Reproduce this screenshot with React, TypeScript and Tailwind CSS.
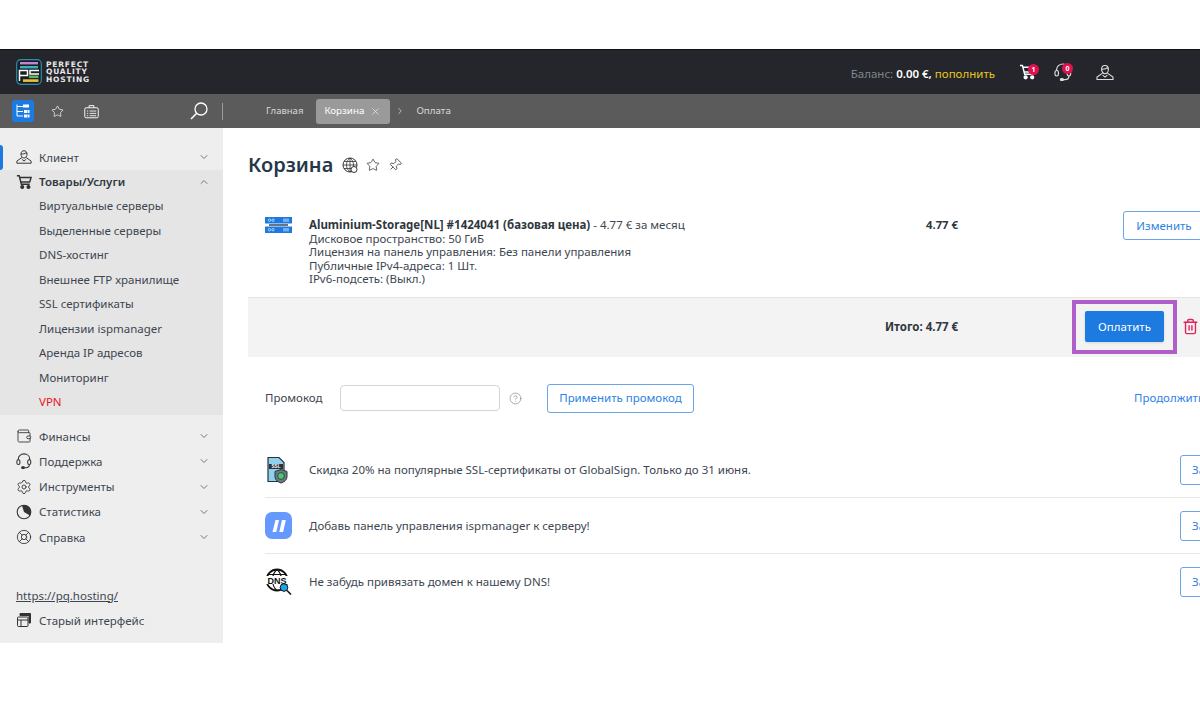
import React from "react";
import { ChevronDown, ChevronUp, Star, Pin, Trash2, X, ChevronRight, Settings, LifeBuoy, Wallet, CircleHelp } from "lucide-react";

const font = { fontFamily: '"Noto Sans", sans-serif' };

function UserIcon({ className = "" }: { className?: string }) {
  return (
    <svg viewBox="0 0 18 16" className={className} fill="none" stroke="currentColor" strokeWidth="1.1">
      <path d="M5.6 4.8C5.6 2.4 7 1 9 1s3.4 1.4 3.4 3.8c0 2.3-1.5 4.4-3.4 4.4S5.6 7.1 5.6 4.8Z" />
      <path d="M5.6 4.6c2 .2 4.6-.2 5.6-1.4.4.6.8 1 1.2 1.2" />
      <path d="M6.6 8.6 1 12.6V15h16v-2.4l-5.6-4" />
      <path d="m6.6 10.6 2.4 2 2.4-2" />
    </svg>
  );
}

function CartIcon({ className = "" }: { className?: string }) {
  return (
    <svg viewBox="0 0 18 17" className={className} fill="none" stroke="currentColor" strokeWidth="1.6">
      <path d="M1 1.500h2.600l2.400 9.500h9.400" />
      <path d="M4.200 3.500H17l-1.600 5H5.400" />
      <circle cx="7" cy="14.200" r="1.500" fill="currentColor" />
      <circle cx="14" cy="14.200" r="1.500" fill="currentColor" />
    </svg>
  );
}

function HeadsetIcon({ className = "" }: { className?: string }) {
  return (
    <svg viewBox="0 0 18 18" className={className} fill="none" stroke="currentColor" strokeWidth="1.200">
      <path d="M2.600 8V6.600C2.600 3.400 5.400 1 9 1s6.400 2.400 6.400 5.600V8" />
      <rect x="1" y="7.500" width="3.400" height="5.500" rx="1.700" />
      <rect x="13.200" y="7.500" width="3.400" height="5.500" rx="1.700" />
      <path d="M15 13c0 2.400-1.600 3.600-4 3.600H8.400" />
      <rect x="6.400" y="15.600" width="3" height="1.800" rx=".9" fill="currentColor" />
    </svg>
  );
}

function TreeIcon() {
  return (
    <svg viewBox="0 0 16 16" className="h-[16px] w-[16px]" fill="none" stroke="white" strokeWidth="1">
      <path d="M2 1.500v11.500h6M2 3.500h6M2 8.500h6" />
      <rect x="8" y="1.500" width="6" height="3" fill="white" stroke="none" />
      <rect x="9" y="7" width="3" height="3" fill="white" stroke="none" />
      <rect x="12.500" y="7" width="2" height="3" fill="white" stroke="none" />
      <rect x="9" y="11.500" width="3" height="3" fill="white" stroke="none" />
      <rect x="12.500" y="11.500" width="2" height="3" fill="white" stroke="none" />
    </svg>
  );
}

function CaseIcon() {
  return (
    <svg viewBox="0 0 16 15" className="h-[15px] w-[15px]" fill="none" stroke="white" strokeWidth="1">
      <rect x=".8" y="3.500" width="14.400" height="10.700" rx="1.500" />
      <path d="M5.500 3.500V1.200h5v2.300" />
      <path d="M3 7h1.500M6 7h7M3 9.500h1.500M6 9.500h7M3 12h1.500M6 12h7" strokeWidth=".9" />
    </svg>
  );
}

function SearchIcon() {
  return (
    <svg viewBox="0 0 18 18" className="h-[18px] w-[18px]" fill="none" stroke="white" strokeWidth="1.300">
      <circle cx="11" cy="7" r="6" />
      <path d="M6.700 11.300 1 17" strokeWidth="1.600" />
    </svg>
  );
}

function GlobeIcon() {
  return (
    <svg viewBox="0 0 16 16" className="h-[16px] w-[16px]" fill="none" stroke="#333" strokeWidth="1">
      <circle cx="8" cy="8" r="7" />
      <path d="M1 8h14M2 4.500h12M2 11.500h12M8 1v14M8 1C5.500 3 4.500 5.500 4.500 8s1 5 3.500 7M8 1c2.500 2 3.500 4.500 3.500 7s-1 5-3.500 7" strokeWidth=".8" />
      <circle cx="12" cy="12.500" r="3" fill="#fff" stroke="#333" />
    </svg>
  );
}

function Logo() {
  return (
    <div className="flex items-center gap-[4px]">
      <svg viewBox="0 0 26 26" className="h-[26px] w-[26px]">
        <rect x=".7" y=".7" width="24.600" height="24.600" rx="4" fill="#1c2024" stroke="#2c8fa6" strokeWidth="1.200" />
        <rect x="4" y="3" width="18" height="2.400" fill="#c583d6" />
        <rect x="4" y="7" width="18" height="2.400" fill="#35b3c4" />
        <path d="M3.500 22V11.500h8v5H3.500M23 11.500h-9v3.600h9" stroke="#fff" strokeWidth="1.500" fill="none" />
        <rect x="13" y="16.500" width="9.500" height="2.600" fill="#5cb85c" />
        <rect x="7" y="20.300" width="15.500" height="2.600" fill="#e8c33a" />
      </svg>
      <div className="flex flex-col text-[7.500px] font-semibold uppercase leading-[7.500px] tracking-[0.8px] text-[#e8e8e8]" style={{ fontFamily: '"DejaVu Sans", sans-serif' }}>
        <span>Perfect</span>
        <span>Quality</span>
        <span>Hosting</span>
      </div>
    </div>
  );
}

function ServerIcon() {
  return (
    <svg viewBox="0 0 27 16" className="h-[16px] w-[27px]">
      <rect x="0" y="0" width="27" height="6.500" fill="#1c7ae0" />
      <rect x="0" y="9.500" width="27" height="6.500" fill="#1c7ae0" />
      <rect x="4" y="7.300" width="19" height="1.400" fill="#2a3a4a" />
      <circle cx="4.500" cy="3.200" r="1.200" fill="none" stroke="#fff" strokeWidth=".6" />
      <circle cx="8" cy="3.200" r="1.200" fill="none" stroke="#fff" strokeWidth=".6" />
      <circle cx="4.500" cy="12.700" r="1.200" fill="none" stroke="#fff" strokeWidth=".6" />
      <circle cx="8" cy="12.700" r="1.200" fill="none" stroke="#fff" strokeWidth=".6" />
      <path d="M19 1.500v3.400M21 1.500v3.400M23 1.500v3.400M19 11v3.400M21 11v3.400M23 11v3.400" stroke="#fff" strokeWidth=".8" />
    </svg>
  );
}

function SslIcon() {
  return (
    <svg viewBox="0 0 26 28" className="h-[28px] w-[26px]">
      <path d="M3 1.500h11l5 5v19H3Z" fill="#8fd0ec" stroke="#27323a" strokeWidth="1.200" />
      <rect x="4" y="8" width="14" height="5" fill="#27323a" />
      <text x="11" y="12.200" fontSize="4.600" fontWeight="700" textAnchor="middle" fill="#fff" fontFamily="Liberation Sans">SSL</text>
      <path d="M16 13.500l6 2v5c0 3.400-2.600 5.400-6 6.500-3.400-1.100-6-3.100-6-6.500v-5Z" fill="#6b7a85" stroke="#27323a" strokeWidth="1" />
      <circle cx="16" cy="20" r="3.400" fill="#4fc66a" stroke="#27323a" strokeWidth=".8" />
    </svg>
  );
}

function PanelIcon() {
  return (
    <div className="flex h-[27px] w-[27px] items-center justify-center rounded-[7px] bg-[#6699ff]">
      <svg viewBox="0 0 16 14" className="h-[14px] w-[16px]" fill="white">
        <path d="M4.500 1H8L5.300 13H1.500Z" />
        <path d="M11 1h3.800l-2.700 12H8.300Z" />
      </svg>
    </div>
  );
}

function DnsIcon() {
  return (
    <svg viewBox="0 0 28 28" className="h-[28px] w-[28px]" fill="none">
      <circle cx="12" cy="12" r="10.500" stroke="#111" strokeWidth="1.800" />
      <path d="M3 6.500h18M12 1.500c-3 2.500-4.500 6-4.500 10.500s1.500 8 4.500 10.500M12 1.500c3 2.500 4.500 6 4.500 10.500" stroke="#111" strokeWidth="1.100" />
      <rect x="0" y="8" width="24" height="8" fill="#fff" />
      <text x="12" y="15.500" fontSize="9" fontWeight="700" textAnchor="middle" fill="#111" fontFamily="Liberation Sans">DNS</text>
      <circle cx="19" cy="19.500" r="3.800" fill="#1ea4e8" stroke="#111" strokeWidth="1" />
      <path d="m22 22.500 4 4" stroke="#111" strokeWidth="1.600" />
    </svg>
  );
}

function PieIcon({ className = "" }: { className?: string }) {
  return (
    <svg viewBox="0 0 16 16" className={className}>
      <circle cx="8" cy="8" r="6.800" fill="none" stroke="currentColor" strokeWidth="1.100" />
      <path d="M6 1.500a6.800 6.800 0 0 1 7.900 10L8 8Z" fill="currentColor" />
    </svg>
  );
}

function OldIcon({ className = "" }: { className?: string }) {
  return (
    <svg viewBox="0 0 16 16" className={className} fill="none" stroke="currentColor">
      <path d="M4 1.500h10.500V11H13V3.500H4Z" fill="currentColor" />
      <rect x="1.500" y="5" width="10.500" height="9.500" rx="1" />
      <path d="M1.500 8h10.500M5 8v6.500" />
    </svg>
  );
}

function NavRow({ icon, label, bold = false, up = false, h = "h-[25.250px]" }: { icon: React.ReactNode; label: string; bold?: boolean; up?: boolean; h?: string }) {
  return (
    <div className={`flex items-center pl-[16px] pr-[13px] ${h}`}>
      <span className="flex w-[23px] shrink-0 items-center text-[#333]">{icon}</span>
      <span className={`flex-1 text-[11.500px] ${bold ? "font-semibold text-[#2f3740]" : "text-[#3d4650]"}`}>{label}</span>
      {up ? <ChevronUp className="h-[12px] w-[12px] text-[#777]" /> : <ChevronDown className="h-[12px] w-[12px] text-[#777]" />}
    </div>
  );
}

const subs = ["Виртуальные серверы", "Выделенные серверы", "DNS-хостинг", "Внешнее FTP хранилище", "SSL сертификаты", "Лицензии ispmanager", "Аренда IP адресов", "Мониторинг"];

function Sidebar() {
  const ic = "h-[16px] w-[16px]";
  return (
    <aside className="flex w-[223px] shrink-0 flex-col bg-[#eeeeee] pt-[17px]">
      <div className="relative">
        <span className="absolute left-0 top-0 h-[25px] w-[3px] rounded-r bg-[#1c7ae0]" />
        <NavRow icon={<UserIcon className={ic} />} label="Клиент" h="h-[24.500px]" />
      </div>
      <div className="bg-[#e5e5e5] pb-[1px]">
        <NavRow icon={<CartIcon className={ic} />} label="Товары/Услуги" bold up h="h-[24px]" />
        {subs.map((s) => (
          <div key={s} className="flex h-[24.500px] items-center pl-[39px] text-[11.500px] text-[#3d4650]">{s}</div>
        ))}
        <div className="flex h-[24.500px] items-center pl-[39px] text-[11.500px] text-[#e8141c]">VPN</div>
      </div>
      <div className="mt-[8.500px]">
        <NavRow icon={<Wallet className={ic} strokeWidth={1.300} />} label="Финансы" />
        <NavRow icon={<HeadsetIcon className={ic} />} label="Поддержка" />
        <NavRow icon={<Settings className={ic} strokeWidth={1.300} />} label="Инструменты" />
        <NavRow icon={<PieIcon className={ic} />} label="Статистика" />
        <NavRow icon={<LifeBuoy className={ic} strokeWidth={1.300} />} label="Справка" />
      </div>
      <div className="mt-[33px] flex h-[25px] items-center pl-[16px] text-[11.500px] text-[#3d4650] underline">https://pq.hosting/</div>
      <div className="flex h-[25px] items-center pl-[16px] text-[11.500px] text-[#3d4650]">
        <span className="flex w-[23px] text-[#333]"><OldIcon className={ic} /></span>Старый интерфейс
      </div>
    </aside>
  );
}

function Badge({ n, right }: { n: number; right: string }) {
  return <span className={`absolute top-0 flex h-[11px] w-[11px] items-center justify-center rounded-full bg-[#e0114f] text-[7px] font-bold leading-none text-white ${right}`}>{n}</span>;
}

function Header() {
  return (
    <>
      <header className="flex h-[45px] items-center border-t-[1px] border-[#111] bg-[#25262b] pl-[16px]">
        <Logo />
        <div className="ml-auto flex items-center">
          <span className="pt-[3px] text-[11.500px] text-[#7d8690]">Баланс:</span>
          <span className="ml-[3px] pt-[3px] text-[11.500px] font-semibold text-white">0.00 €,</span>
          <span className="ml-[3px] pt-[3px] text-[11.500px] text-[#e8c81e]">пополнить</span>
          <span className="relative ml-[24px] flex h-[17px] w-[19px] items-start text-white"><CartIcon className="h-[16px] w-[17px]" /><Badge n={1} right="-right-[1px]" /></span>
          <span className="relative ml-[16px] flex h-[18px] w-[19px] items-start text-[#ddd]"><HeadsetIcon className="h-[18px] w-[18px]" /><Badge n={0} right="right-0" /></span>
          <span className="ml-[23px] text-[#ddd]"><UserIcon className="h-[17px] w-[18px]" /></span>
          <span className="ml-[78px] w-[8px]" />
        </div>
      </header>
      <div className="flex h-[34px] items-center bg-[#5b5b5b]">
        <div className="flex w-[223px] shrink-0 items-center pl-[12px]">
          <span className="flex h-[22px] w-[22px] items-center justify-center rounded-[3px] bg-[#1c7ae0]"><TreeIcon /></span>
          <Star className="ml-[17px] h-[13px] w-[13px] text-white" strokeWidth={1.300} />
          <span className="ml-[20px]"><CaseIcon /></span>
          <span className="ml-auto mr-[14px]"><SearchIcon /></span>
          <span className="h-[17px] w-[1px] bg-[#9a9a9a]" />
        </div>
        <nav className="flex items-center pl-[43px] text-[9.800px] text-[#d8d8d8]">
          <span className="text-[9.500px]">Главная</span>
          <span className="ml-[13px] flex h-[25px] w-[74px] items-center rounded-[3px] bg-[#9a9a9a] pl-[8px] text-white">
            Корзина<X className="ml-[6px] h-[11px] w-[11px]" strokeWidth={1.300} />
          </span>
          <ChevronRight className="ml-[5px] h-[10px] w-[10px] text-[#cfcfcf]" />
          <span className="ml-[11px]">Оплата</span>
        </nav>
      </div>
    </>
  );
}

function Promo({ icon, text, border = true }: { icon: React.ReactNode; text: string; border?: boolean }) {
  return (
    <div className={`ml-[17px] flex h-[56px] items-center ${border ? "border-b border-[#e8e8e8]" : ""}`}>
      <span className="flex w-[44px] shrink-0 items-center">{icon}</span>
      <span className="w-[871px] shrink-0 text-[11.500px] text-[#3d4650]">{text}</span>
      <span className="flex h-[30px] w-[80px] shrink-0 items-center rounded-[3px] border border-[#6aa5ea] pl-[11px] text-[11.500px] text-[#2f82e4]">Заказать</span>
    </div>
  );
}

export default function App() {
  return (
    <div className="h-[723px] w-[1200px] overflow-hidden bg-white pt-[49px]" style={font}>
      <Header />
      <div className="flex h-[515px]">
        <Sidebar />
        <main className="min-w-0 flex-1 overflow-hidden">
          <div className="relative w-[1040px] pl-[25px]">
            <div className="flex items-center pt-[24px]">
              <h1 className="text-[20px] font-semibold leading-[25px] text-[#25384a]">Корзина</h1>
              <span className="ml-[9px]"><GlobeIcon /></span>
              <Star className="ml-[8px] h-[14px] w-[14px] text-[#333]" strokeWidth={1.300} />
              <Pin className="ml-[8px] h-[14px] w-[14px] rotate-45 text-[#333]" strokeWidth={1.300} />
            </div>
            <div className="ml-[17px] mt-[41px] flex h-[79px] items-start">
              <span className="-mt-[1px] w-[44px] shrink-0"><ServerIcon /></span>
              <div className="w-[617px] shrink-0 text-[11.500px] leading-[13.500px] text-[#3d4650]">
                <div><b className="font-bold text-[#2f3740]">Aluminium-Storage[NL] #1424041 (базовая цена)</b> - 4.77 € за месяц</div>
                <div>Дисковое пространство: 50 ГиБ</div>
                <div>Лицензия на панель управления: Без панели управления</div>
                <div>Публичные IPv4-адреса: 1 Шт.</div>
                <div>IPv6-подсеть: (Выкл.)</div>
              </div>
              <span className="w-[32px] shrink-0 whitespace-nowrap text-[11.300px] font-bold leading-[13.500px] text-[#2f3740]">4.77 €</span>
              <span className="ml-[165px] -mt-[7px] flex h-[29px] w-[82px] shrink-0 items-center justify-center rounded-[3px] border border-[#6aa5ea] text-[11.500px] text-[#2f82e4]">Изменить</span>
            </div>
            <div className="relative flex h-[60px] items-center border-t border-[#e5e5e5] bg-[#f3f3f3] pb-[2px]">
              <span className="ml-[637px] w-[200px] text-[11.500px] font-bold text-[#2f3740]">Итого: 4.77 €</span>
              <span className="flex h-[31px] w-[79px] items-center justify-center rounded-[2px] bg-[#1c7ae0] text-[11.500px] text-white shadow-sm">Оплатить</span>
              <Trash2 className="ml-[18px] h-[17px] w-[17px] text-[#e0245e]" strokeWidth={2} />
              <span className="absolute left-[824px] top-[2px] h-[54px] w-[105px] border-[4px] border-[#b05fc8]" />
            </div>
            <div className="ml-[17px] mt-[26px] flex h-[30px] items-center">
              <span className="w-[75px] shrink-0 text-[11.500px] text-[#3d4650]">Промокод</span>
              <span className="h-[26px] w-[160px] shrink-0 rounded-[4px] border border-[#d5d5d5] bg-white" />
              <CircleHelp className="ml-[9px] h-[13px] w-[13px] shrink-0 text-[#888]" strokeWidth={1.300} />
              <span className="ml-[25px] flex h-[29px] w-[147px] shrink-0 items-center justify-center rounded-[3px] border border-[#6aa5ea] text-[11.500px] text-[#2f82e4]">Применить промокод</span>
              <span className="ml-[440px] whitespace-nowrap text-[11.500px] text-[#2f82e4]">Продолжить покупки</span>
            </div>
            <div className="mt-[29px]">
              <Promo icon={<SslIcon />} text="Скидка 20% на популярные SSL-сертификаты от GlobalSign. Только до 31 июня." />
              <Promo icon={<PanelIcon />} text="Добавь панель управления ispmanager к серверу!" />
              <Promo icon={<DnsIcon />} text="Не забудь привязать домен к нашему DNS!" border={false} />
            </div>
          </div>
        </main>
      </div>
    </div>
  );
}
